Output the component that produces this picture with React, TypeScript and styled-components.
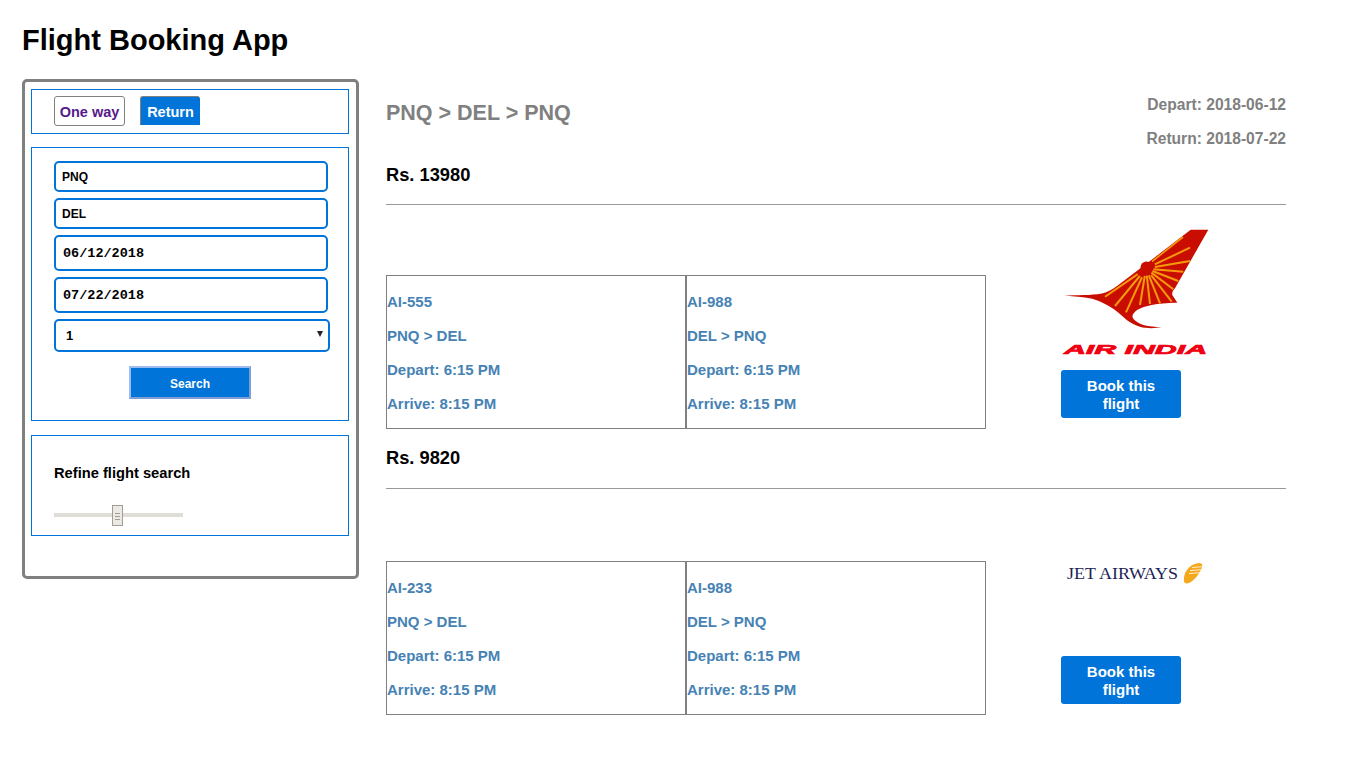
import styled, { createGlobalStyle } from "styled-components";

const GlobalStyle = createGlobalStyle`
  body {
    margin: 0;
    background: #fff;
    font-family: "Liberation Sans", Arial, sans-serif;
  }
`;

const flights = [
  {
    price: "Rs. 13980",
    legs: [
      { no: "AI-555", route: "PNQ > DEL" },
      { no: "AI-988", route: "DEL > PNQ" },
    ],
    airline: "air",
  },
  {
    price: "Rs. 9820",
    legs: [
      { no: "AI-233", route: "PNQ > DEL" },
      { no: "AI-988", route: "DEL > PNQ" },
    ],
    airline: "jet",
  },
];

// ray ends of the sun on the Air India tail, measured from the logo
const sunCentre = [85, 43.5];
const sunRays = [
  [129, 22.7],
  [129, 36],
  [122.3, 46.7],
  [117.3, 56],
  [112.3, 64.3],
  [110.7, 76.7],
  [99, 78.3],
  [89, 79],
  [79, 80],
  [65, 87.3],
  [54, 81],
  [44, 71.7],
];

function AirIndiaLogo() {
  return (
    <LogoSvg viewBox="0 0 147 135" width="147" height="135">
      <path
        d="M129.7 4.7 L147.3 4.7 L114 63.3 C111 66 110.5 70 112 71 L116.3 77.7 C105 78 98 78.5 90.7 80 C82 82 76 84 73 88 C69 92 73 96 82.3 100 C88 101.5 94 102 100.7 102.3 C93 103.5 85 103.5 79 101.7 C73 100 69 97 65.7 95 C60 90 55 85 49 81.7 C41 77 33 73.5 25.7 72.7 C18 71.7 10 71 3 70.7 C16 70 30 70.5 41 68.5 C47 67 51 64.5 56 61 L89 36 Z"
        fill="#c90d00"
      />
      <SunEdge d="M122 12 L91 36.5" />
      <g stroke="#f59a0c" strokeWidth="2">
        {sunRays.map(([x, y]) => (
          <line
            key={`${x}-${y}`}
            x1={sunCentre[0] + (x - sunCentre[0]) * 0.2}
            y1={sunCentre[1] + (y - sunCentre[1]) * 0.2}
            x2={x}
            y2={y}
          />
        ))}
      </g>
      <circle cx="85.5" cy="42.5" r="6" fill="#c90d00" />
      <LogoWord x="3" y="129" textLength="143" lengthAdjust="spacingAndGlyphs">
        AIR INDIA
      </LogoWord>
    </LogoSvg>
  );
}

function JetLogo() {
  return (
    <LogoSvg viewBox="0 0 147 145" width="147" height="145">
      <JetWord x="6" y="78" textLength="111" lengthAdjust="spacingAndGlyphs">
        JET AIRWAYS
      </JetWord>
      <path
        d="M123 80 C122 72 128 63 138 62 C142 62 142 65 140 69 C137 75 131 82 126 82.5 C124 82.5 123 81.5 123 80 Z"
        fill="#f5a81c"
      />
      <g stroke="#fff" strokeWidth="0.8">
        <path d="M131 66.5 L144 65.5" />
        <path d="M129 69.5 L144 68.5" />
        <path d="M128 72.5 L142 71.5" />
      </g>
    </LogoSvg>
  );
}

export default function App() {
  return (
    <Page>
      <GlobalStyle />
      <Title>Flight Booking App</Title>
      <Columns>
        <Sidebar>
          <TabBox>
            <TabButton>One way</TabButton>
            <TabButton $active>Return</TabButton>
          </TabBox>
          <SearchBox>
            <TextInput defaultValue="PNQ" />
            <TextInput defaultValue="DEL" />
            <DateInput defaultValue="06/12/2018" />
            <DateInput defaultValue="07/22/2018" />
            <SelectWrap>
              <PassengerSelect defaultValue="1">
                <option>1</option>
                <option>2</option>
              </PassengerSelect>
            </SelectWrap>
            <SearchButton>Search</SearchButton>
          </SearchBox>
          <RefineBox>
            <RefineLabel>Refine flight search</RefineLabel>
            <Slider type="range" min="0" max="100" defaultValue="49" />
          </RefineBox>
        </Sidebar>
        <Results>
          <ResultsHeader>
            <RouteTitle>PNQ &gt; DEL &gt; PNQ</RouteTitle>
            <Dates>
              <DateLine>Depart: 2018-06-12</DateLine>
              <DateLine>Return: 2018-07-22</DateLine>
            </Dates>
          </ResultsHeader>
          {flights.map((f) => (
            <FlightBlock key={f.price}>
              <Price>{f.price}</Price>
              <Rule $jet={f.airline === "jet"} />
              <FlightRow $jet={f.airline === "jet"}>
                <Legs $jet={f.airline === "jet"}>
                  {f.legs.map((leg) => (
                    <Leg key={leg.no}>
                      <LegLine>{leg.no}</LegLine>
                      <LegLine>{leg.route}</LegLine>
                      <LegLine>Depart: 6:15 PM</LegLine>
                      <LegLine>Arrive: 8:15 PM</LegLine>
                    </Leg>
                  ))}
                </Legs>
                <BookColumn>
                  {f.airline === "air" ? <AirIndiaLogo /> : <JetLogo />}
                  <BookButton>Book this flight</BookButton>
                </BookColumn>
              </FlightRow>
            </FlightBlock>
          ))}
        </Results>
      </Columns>
    </Page>
  );
}

const Page = styled.div`
  padding: 23px 0 0 22px;
  height: 745px;
  overflow: hidden;
`;

const Title = styled.h1`
  margin: 0;
  font-size: 29px;
  line-height: 35px;
  font-weight: 700;
  color: #000;
`;

const Columns = styled.div`
  display: flex;
  align-items: flex-start;
  gap: 27px;
  margin-top: 21px;
`;

const Sidebar = styled.aside`
  box-sizing: border-box;
  width: 337px;
  height: 500px;
  border: 3px solid #808080;
  border-radius: 5px;
  padding: 7px 6px;
  display: flex;
  flex-direction: column;
`;

const Box = styled.div`
  box-sizing: border-box;
  width: 318px;
  border: 1px solid #0074d9;
`;

const TabBox = styled(Box)`
  height: 45px;
  padding: 6px 22px;
  display: flex;
  gap: 15px;
  align-items: flex-start;
`;

const TabButton = styled.button<{ $active?: boolean }>`
  box-sizing: border-box;
  width: ${(p) => (p.$active ? "60px" : "71px")};
  height: ${(p) => (p.$active ? "29px" : "30px")};
  padding: 2px 0 0;
  border: 1px solid #808080;
  border-width: ${(p) => (p.$active ? "1px 0 0 1px" : "1px")};
  border-radius: ${(p) => (p.$active ? "3px 3px 0 0" : "3px")};
  background: ${(p) => (p.$active ? "#0074d9" : "#fff")};
  color: ${(p) => (p.$active ? "#fff" : "#551a8b")};
  font-family: inherit;
  font-size: 14.5px;
  font-weight: 700;
`;

const SearchBox = styled(Box)`
  margin-top: 13px;
  height: 274px;
  padding: 13px 22px 0;
  display: flex;
  flex-direction: column;
`;

const TextInput = styled.input`
  box-sizing: border-box;
  width: 274px;
  height: 31px;
  margin-bottom: 6px;
  padding: 0 6px;
  border: 2px solid #0074d9;
  border-radius: 5px;
  font-family: "Liberation Sans", Arial, sans-serif;
  font-size: 12px;
  font-weight: 700;
  color: #000;
  outline: none;
`;

const DateInput = styled(TextInput)`
  height: 36px;
  padding: 1px 7px 0;
  font-family: "Liberation Mono", "Courier New", monospace;
  font-size: 13.5px;
`;

const SelectWrap = styled.div`
  position: relative;
  width: 276px;

  &::after {
    content: "";
    position: absolute;
    right: 7px;
    top: 12px;
    border-left: 3.5px solid transparent;
    border-right: 3.5px solid transparent;
    border-top: 6px solid #222;
  }
`;

const PassengerSelect = styled.select`
  box-sizing: border-box;
  width: 276px;
  height: 33px;
  padding: 0 10px;
  border: 2px solid #0074d9;
  border-radius: 5px;
  appearance: none;
  background: #fff;
  font-family: "Liberation Sans", Arial, sans-serif;
  font-size: 13px;
  font-weight: 700;
  color: #000;
  outline: none;
`;

const SearchButton = styled.button`
  box-sizing: border-box;
  align-self: center;
  width: 122px;
  height: 33px;
  margin-top: 14px;
  padding: 2px 0 0;
  border: 2px solid #9dbcf0;
  border-right-color: #7f9fd4;
  border-bottom-color: #7f9fd4;
  background: #0074d9;
  color: #fff;
  font-family: inherit;
  font-size: 12px;
  font-weight: 700;
`;

const RefineBox = styled(Box)`
  margin-top: 14px;
  height: 101px;
  padding: 28px 22px 0;
`;

const RefineLabel = styled.div`
  font-size: 14.7px;
  line-height: 18px;
  font-weight: 700;
  color: #000;
`;

const Slider = styled.input`
  display: block;
  appearance: none;
  width: 129px;
  height: 22px;
  margin: 22px 0 0;
  background: transparent;

  &::-webkit-slider-runnable-track {
    height: 4px;
    background: #e0ddd8;
  }

  &::-webkit-slider-thumb {
    appearance: none;
    box-sizing: border-box;
    width: 11px;
    height: 21px;
    margin-top: -8px;
    border: 1px solid #a09c97;
    background: linear-gradient(#a09c97, #a09c97) center 7px / 5px 1px no-repeat,
      linear-gradient(#a09c97, #a09c97) center 10px / 5px 1px no-repeat,
      linear-gradient(#a09c97, #a09c97) center 13px / 5px 1px no-repeat, #ece9e4;
  }
`;

const Results = styled.main`
  width: 900px;
`;

const ResultsHeader = styled.div`
  display: flex;
  justify-content: space-between;
  align-items: flex-start;
  height: 81px;
`;

const RouteTitle = styled.h2`
  margin: 21px 0 0;
  font-size: 21.5px;
  line-height: 26px;
  font-weight: 700;
  color: #808080;
`;

const Dates = styled.div`
  text-align: right;
  padding-top: 17px;
`;

const DateLine = styled.div`
  font-size: 15.6px;
  line-height: 18px;
  margin-bottom: 16px;
  font-weight: 700;
  color: #808080;
`;

const FlightBlock = styled.section``;

const Price = styled.div`
  font-size: 18.3px;
  line-height: 20px;
  font-weight: 700;
  color: #000;
  margin-top: 5px;
`;

const Rule = styled.hr<{ $jet?: boolean }>`
  height: 1px;
  margin: ${(p) => (p.$jet ? "20px" : "19px")} 0 0;
  border: 0;
  background: #999;
`;

const FlightRow = styled.div<{ $jet?: boolean }>`
  display: flex;
  align-items: flex-start;
  margin-top: ${(p) => (p.$jet ? "12px" : "20px")};
  height: ${(p) => (p.$jet ? "230px" : "218px")};
`;

const Legs = styled.div<{ $jet?: boolean }>`
  display: flex;
  width: 600px;
  margin-top: ${(p) => (p.$jet ? "60px" : "50px")};
  border: 1px solid #808080;
  box-sizing: border-box;
  height: 154px;
`;

const Leg = styled.div`
  box-sizing: border-box;
  width: 299px;
  padding-top: 17px;
  border-right: 1px solid #808080;

  & + & {
    border-right: 0;
    border-left: 1px solid #808080;
  }
`;

const LegLine = styled.div`
  font-size: 15px;
  line-height: 18px;
  margin-bottom: 16px;
  font-weight: 700;
  color: #4682b4;
`;

const BookColumn = styled.div`
  margin-left: 75px;
  width: 147px;
`;

const LogoSvg = styled.svg`
  display: block;
`;

const SunEdge = styled.path`
  fill: none;
  stroke: #f59a0c;
  stroke-width: 1.6;
`;

const LogoWord = styled.text`
  font-family: "Liberation Sans", Arial, sans-serif;
  font-size: 13.5px;
  font-weight: 700;
  font-style: italic;
  fill: #f00012;
  stroke: #f00012;
  stroke-width: 0.7;
`;

const JetWord = styled.text`
  font-family: "Liberation Serif", "Times New Roman", serif;
  font-size: 16.5px;
  fill: #1d1f55;
`;

const BookButton = styled.button`
  display: block;
  width: 120px;
  height: 48px;
  margin-top: 10px;
  padding: 2px 16px 0;
  border: 0;
  border-radius: 3px;
  background: #0074d9;
  color: #fff;
  font-family: inherit;
  font-size: 15px;
  line-height: 18px;
  font-weight: 700;
`;
